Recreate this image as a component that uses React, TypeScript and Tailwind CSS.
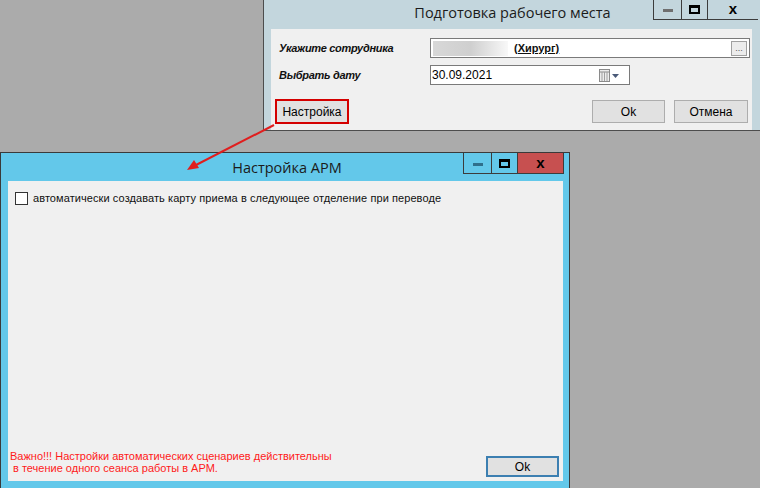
import React from "react";

const ui = { fontFamily: '"Liberation Sans", Arial, sans-serif' };
const title = { fontFamily: '"Open Sans", "Noto Sans", sans-serif' };

function TitleButtons({ active }: { active?: boolean }) {
  return (
    <div className="flex h-full border-b border-l border-[#3c3c3c]">
      <div className="flex w-[28px] items-center justify-center border-r border-[#3c3c3c]">
        <div className={`mt-[2px] h-[3px] w-[10px] ${active ? "bg-[#2f6f8c]" : "bg-[#6f6f6f]"}`} />
      </div>
      <div className="flex w-[26px] items-center justify-center border-r border-[#3c3c3c]">
        <div className="h-[9px] w-[11px] border-2 border-t-[3px] border-black" />
      </div>
      <div
        className={`flex flex-1 items-center justify-center text-[15px] font-bold text-black ${
          active ? "bg-[#c75050] border-r border-[#3c3c3c]" : ""
        }`}
        style={ui}
      >
        x
      </div>
    </div>
  );
}

function Button({ label, focused, red, w }: { label: string; focused?: boolean; red?: boolean; w: string }) {
  return (
    <div
      className={`flex items-center justify-center bg-[#e1e1e1] text-[12px] text-black ${w} ${
        red ? "h-[25px] border-2 border-[#d40000]" : focused ? "h-[21px] border-2 border-[#3c7fb1]" : "h-[23px] border border-[#adadad]"
      }`}
      style={ui}
    >
      {label}
    </div>
  );
}

function TopWindow() {
  return (
    <div className="absolute left-[263px] top-0 flex h-[131px] w-[497px] flex-col border-l border-b border-[#4d4d4d] bg-[#c3d6dd]">
      <div className="flex h-[29px]">
        <div className="flex flex-1 items-start justify-center pt-[2px] pl-[108px] text-[14.5px] text-[#1b1b1b]" style={title}>
          Подготовка рабочего места
        </div>
        <div className="h-[20px] w-[105px] mr-[2px]">
          <TitleButtons />
        </div>
      </div>
      <div className="ml-[7px] mr-[8px] flex flex-1 flex-col bg-[#f0f0f0] pb-[6px]">
        <div className="mt-[9px] flex items-center">
          <div className="w-[159px] pl-[8px] text-[11px] font-bold italic tracking-[-0.3px] text-[#111]" style={ui}>
            Укажите сотрудника
          </div>
          <div className="flex h-[20px] w-[320px] items-center border border-[#7a7a7a] bg-white">
            <div className="ml-[2px] h-[15px] w-[75px] bg-gradient-to-r from-[#d8d8d8] via-[#cfcfcf] to-[#f8f8f8]" />
            <div className="ml-[6px] text-[11px] font-bold text-[#111] underline" style={ui}>
              (Хирург)
            </div>
            <div className="ml-auto mr-[2px] flex h-[15px] w-[16px] items-end justify-center border border-[#a0a0a0] bg-[#ececec] pb-[2px] text-[9px] leading-none text-[#555]" style={ui}>
              ...
            </div>
          </div>
        </div>
        <div className="mt-[7px] flex items-center">
          <div className="w-[159px] pl-[8px] text-[11px] font-bold italic tracking-[-0.3px] text-[#111]" style={ui}>
            Выбрать дату
          </div>
          <div className="flex h-[20px] w-[200px] items-center border border-[#7a7a7a] bg-white pl-[1px]">
            <div className="text-[12px] text-black" style={ui}>
              30.09.2021
            </div>
            <svg className="ml-auto mr-[8px]" width="22" height="13" viewBox="0 0 22 13">
              <rect x="0.5" y="0.5" width="10" height="12" fill="#ececec" stroke="#8a8a8a" />
              <line x1="0.5" y1="3" x2="10.5" y2="3" stroke="#8a8a8a" />
              <line x1="3" y1="3" x2="3" y2="12" stroke="#a0a0a0" />
              <line x1="5.5" y1="3" x2="5.5" y2="12" stroke="#a0a0a0" />
              <line x1="8" y1="3" x2="8" y2="12" stroke="#a0a0a0" />
              <path d="M13 5 L20 5 L16.5 9 Z" fill="#4a5a78" />
            </svg>
          </div>
        </div>
        <div className="mt-auto flex items-end">
          <div className="ml-[4px]">
            <Button label="Настройка" red w="w-[74px]" />
          </div>
          <div className="ml-auto flex gap-[9px] mr-[4px] mb-[1px]">
            <Button label="Ok" w="w-[73px]" />
            <Button label="Отмена" w="w-[74px]" />
          </div>
        </div>
      </div>
    </div>
  );
}

function BottomWindow() {
  return (
    <div className="absolute left-0 top-[152px] flex h-[340px] w-[570px] flex-col border border-[#3a3a3a] bg-[#63c8ea]">
      <div className="flex h-[28px]">
        <div className="flex flex-1 items-start justify-center pt-[4px] pl-[110px] text-[14.5px] text-[#1b1b1b]" style={title}>
          Настройка АРМ
        </div>
        <div className="h-[21px] w-[101px] mr-[5px]">
          <TitleButtons active />
        </div>
      </div>
      <div className="ml-[7px] mr-[6px] mb-[6px] flex h-[300px] flex-col bg-[#f0f0f0] px-[7px]">
        <div className="mt-[10px] flex items-center gap-[5px]">
          <div className="h-[13px] w-[13px] border border-[#333] bg-white" />
          <div className="-mt-[1px] text-[11px] tracking-[0.08px] text-[#111]" style={ui}>
            автоматически создавать карту приема в следующее отделение при переводе
          </div>
        </div>
        <div className="mt-auto mb-[3px] flex items-end">
          <div className="-ml-[5px] mb-[4px] text-[11px] leading-[12px] text-[#ff1a1a]" style={ui}>
            <div>Важно!!! Настройки автоматических сценариев действительны</div>
            <div>&nbsp;в течение одного сеанса работы в АРМ.</div>
          </div>
          <div className="ml-auto mr-[-3px] mb-[1px]">
            <Button label="Ok" focused w="w-[73px]" />
          </div>
        </div>
      </div>
    </div>
  );
}

export default function App() {
  return (
    <div className="relative h-[488px] w-[760px] overflow-hidden bg-[#ababab]">
      <TopWindow />
      <BottomWindow />
      <svg className="absolute left-0 top-0" width="760" height="488" viewBox="0 0 760 488">
        <line x1="274" y1="125" x2="196" y2="165" stroke="#e01e1e" strokeWidth="2" />
        <path d="M187 170 L194 160 L199 168 Z" fill="#e01e1e" />
      </svg>
    </div>
  );
}
